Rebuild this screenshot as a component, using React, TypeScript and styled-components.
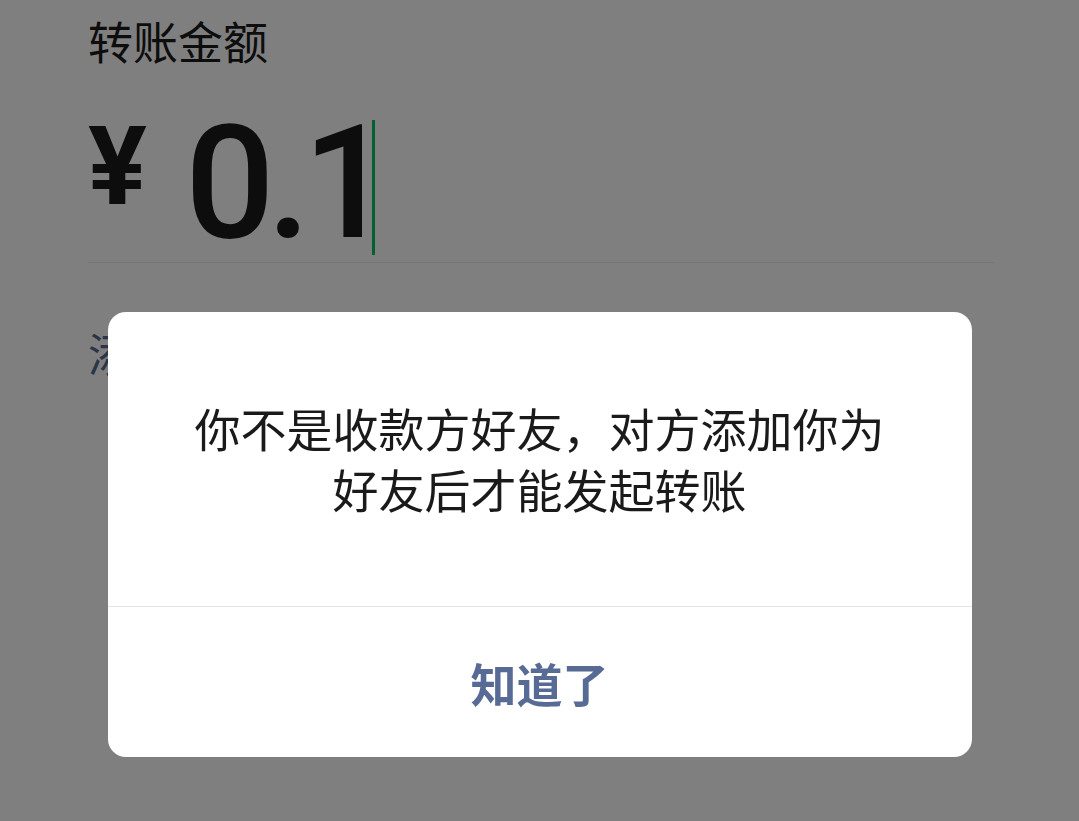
import React from "react";
import styled, { createGlobalStyle } from "styled-components";

const GlobalStyle = createGlobalStyle`
	html, body {
		margin: 0;
		padding: 0;
		background: #ffffff;
	}
	body {
		font-family: "Noto Sans CJK SC", "Noto Sans", sans-serif;
		color: #1a1a1a;
	}
	* {
		box-sizing: border-box;
	}
`;

const App = () => {
	return (
		<>
			<GlobalStyle />
			<Page>
				<Label>转账金额</Label>
				<AmountRow>
					<Currency>¥</Currency>
					<Amount>0.1</Amount>
					<Caret />
				</AmountRow>
				<NoteLink>添加转账说明</NoteLink>
			</Page>

			<Overlay>
				<Dialog>
					<DialogBody>你不是收款方好友，对方添加你为好友后才能发起转账</DialogBody>
					<DialogFooter>
						<DialogButton type='button'>知道了</DialogButton>
					</DialogFooter>
				</Dialog>
			</Overlay>
		</>
	);
};

const Page = styled.div`
	width: 1079px;
	min-height: 821px;
	padding: 11px 84px 0 88px;
	background: #ffffff;
`;

const Label = styled.div`
	font-size: 45px;
	line-height: 60px;
	font-weight: 400;
	color: #1a1a1a;
`;

const AmountRow = styled.div`
	margin-top: 33px;
	height: 159px;
	display: flex;
	align-items: flex-start;
	border-bottom: 1px solid #ececec;
`;

const Currency = styled.span`
	margin: 8px 0 0 0;
	font-family: Roboto, "Liberation Sans", sans-serif;
	font-size: 110px;
	line-height: 1;
	font-weight: 700;
	color: #1a1a1a;
`;

const Amount = styled.span`
	margin-left: 38px;
	font-family: Roboto, "Liberation Sans", sans-serif;
	font-size: 158px;
	line-height: 1;
	font-weight: 500;
	letter-spacing: -8px;
	color: #1a1a1a;
`;

const Caret = styled.span`
	width: 3px;
	height: 135px;
	margin: 16px 0 0 -12px;
	background: #07c160;
`;

const NoteLink = styled.div`
	margin-top: 60px;
	font-size: 45px;
	line-height: 60px;
	color: #576b95;
`;

const Overlay = styled.div`
	position: fixed;
	inset: 0;
	display: flex;
	justify-content: center;
	align-items: flex-start;
	padding-top: 312px;
	background: rgba(0, 0, 0, 0.5);
`;

const Dialog = styled.div`
	width: 864px;
	background: #ffffff;
	border-radius: 18px;
	overflow: hidden;
`;

const DialogBody = styled.div`
	padding: 85px 72px 87px;
	font-size: 46px;
	line-height: 61px;
	text-align: center;
	color: #1a1a1a;
	line-break: strict;
`;

const DialogFooter = styled.div`
	height: 151px;
	display: flex;
	border-top: 1px solid #e5e5e5;
`;

const DialogButton = styled.button`
	flex: 1;
	border: none;
	background: transparent;
	padding: 0;
	font-family: "Noto Sans CJK SC", sans-serif;
	font-size: 46px;
	font-weight: 700;
	color: #576b95;
	cursor: pointer;
`;

export default App;
